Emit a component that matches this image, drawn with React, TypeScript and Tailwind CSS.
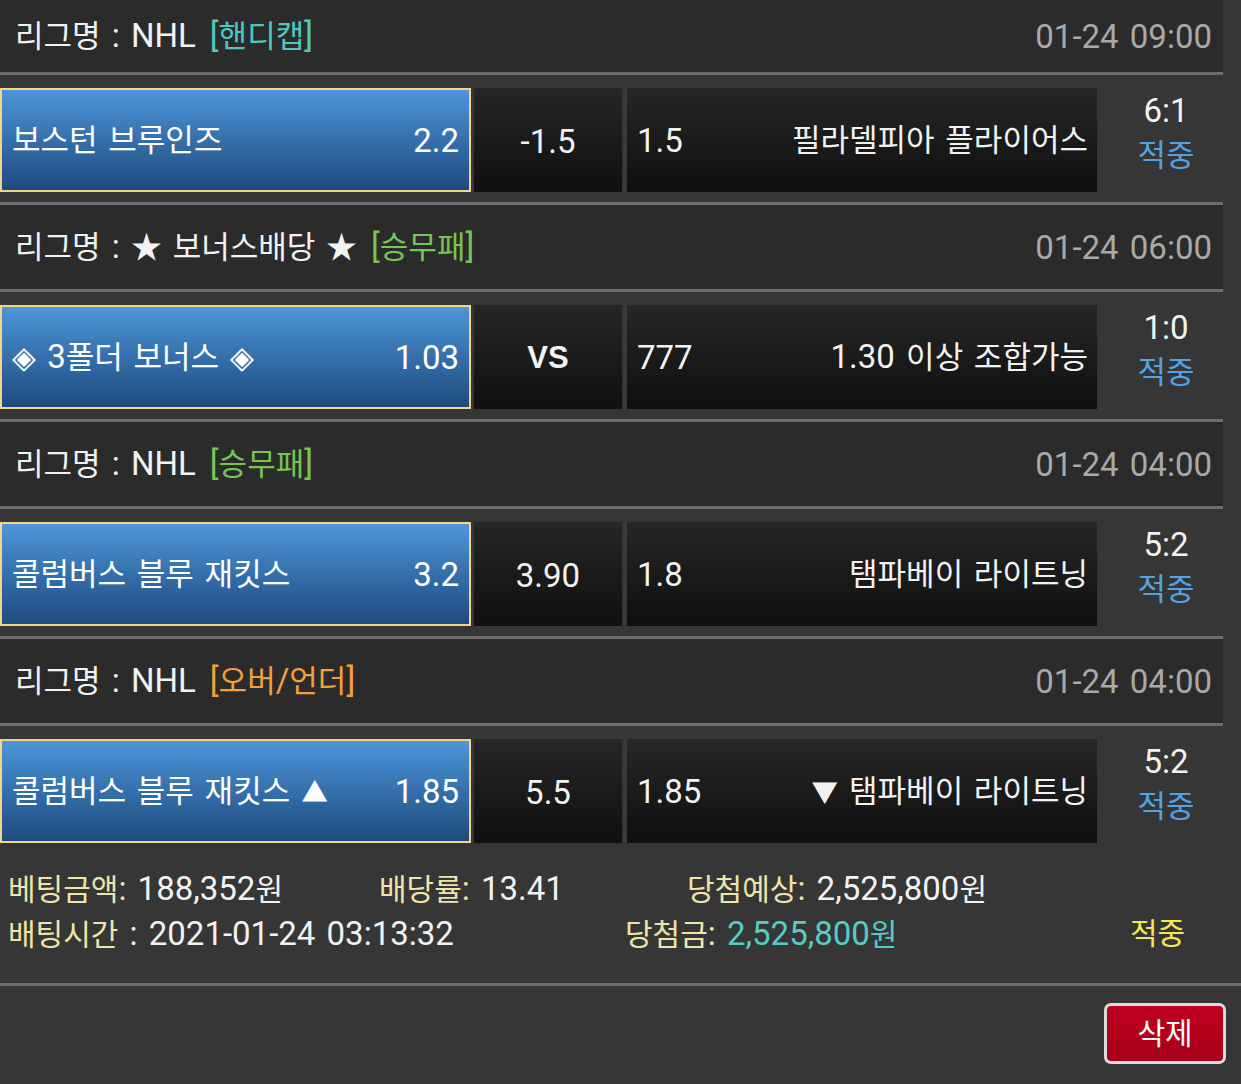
import React from "react";

type Match = {
  league: string;
  tag: string;
  tagColor: string;
  date: string;
  home: string;
  homeOdds: string;
  mid: string;
  midBold?: boolean;
  awayOdds: string;
  away: string;
  score: string;
};

const matches: Match[] = [
  {
    league: "리그명 : NHL",
    tag: "[핸디캡]",
    tagColor: "text-[#4fc9bf]",
    date: "01-24 09:00",
    home: "보스턴 브루인즈",
    homeOdds: "2.2",
    mid: "-1.5",
    awayOdds: "1.5",
    away: "필라델피아 플라이어스",
    score: "6:1",
  },
  {
    league: "리그명 : ★ 보너스배당 ★",
    tag: "[승무패]",
    tagColor: "text-[#78c454]",
    date: "01-24 06:00",
    home: "◈ 3폴더 보너스 ◈",
    homeOdds: "1.03",
    mid: "VS",
    midBold: true,
    awayOdds: "777",
    away: "1.30 이상 조합가능",
    score: "1:0",
  },
  {
    league: "리그명 : NHL",
    tag: "[승무패]",
    tagColor: "text-[#78c454]",
    date: "01-24 04:00",
    home: "콜럼버스 블루 재킷스",
    homeOdds: "3.2",
    mid: "3.90",
    awayOdds: "1.8",
    away: "탬파베이 라이트닝",
    score: "5:2",
  },
  {
    league: "리그명 : NHL",
    tag: "[오버/언더]",
    tagColor: "text-[#f3a03a]",
    date: "01-24 04:00",
    home: "콜럼버스 블루 재킷스 ▲",
    homeOdds: "1.85",
    mid: "5.5",
    awayOdds: "1.85",
    away: "▼ 탬파베이 라이트닝",
    score: "5:2",
  },
];

// Hangul and symbol runs are drawn a little smaller than the Latin text,
// as the Korean fallback font is in the reference.
function T({ s }: { s: string }) {
  const parts = s.split(/([▲▼]|[\u3131-\uD79D★◈]+(?:\s+[\u3131-\uD79D★◈]+)*)/);
  return (
    <>
      {parts.map((p, i) =>
        i % 2 === 1 ? (
          p === "▲" || p === "▼" ? (
            <span key={i} className="text-[0.8em]">
              {p}
            </span>
          ) : (
            <span key={i} className="text-[0.94em]">
              {p}
            </span>
          )
        ) : (
          <React.Fragment key={i}>{p}</React.Fragment>
        )
      )}
    </>
  );
}

function Line() {
  return <div className="h-[3px] w-[1223px] bg-[#6d6d6d]" />;
}

export default function App() {
  return (
    <div
      className="w-[1241px] h-[1084px] overflow-hidden bg-[#363636] text-[#f2f2f2] text-[33px] leading-none [word-spacing:3px]"
      style={{ fontFamily: 'Roboto, "Noto Sans CJK KR", sans-serif' }}
    >
      {matches.map((m, i) => (
        <div key={i}>
          {i > 0 && <Line />}
          <div
            className={`${i === 0 ? "h-[72px]" : "h-[84px]"} w-[1223px] bg-[#2b2b2b] flex items-center justify-between pl-[15px] pr-[11px]`}
          >
            <div className="flex items-center">
              <span>
                <T s={m.league} />
              </span>
              <span className={`ml-[14px] ${m.tagColor}`}>
                <T s={m.tag} />
              </span>
            </div>
            <span className="text-[#a9a9a9]">{m.date}</span>
          </div>
          <Line />
          <div className="h-[127px] flex items-start pt-[13px]">
            <div className="w-[471px] h-[104px] border-2 border-[#f3d489] bg-gradient-to-b from-[#4d96da] to-[#1e4b7f] flex items-center justify-between pl-[10px] pr-[10px] text-white">
              <span>
                <T s={m.home} />
              </span>
              <span>{m.homeOdds}</span>
            </div>
            {m.midBold ? (
              <div
                className="ml-[3px] w-[148px] h-[104px] bg-gradient-to-b from-[#272727] to-[#0f0f0f] flex items-center justify-center font-bold text-[31px]"
                style={{ fontFamily: '"Liberation Sans", Arial, sans-serif' }}
              >
                {m.mid}
              </div>
            ) : (
              <div className="ml-[3px] w-[148px] h-[104px] bg-gradient-to-b from-[#272727] to-[#0f0f0f] flex items-center justify-center pt-[3px]">
                {m.mid}
              </div>
            )}
            <div className="ml-[2px] w-[3px] h-[104px] bg-[#3a3a3a]" />
            <div className="w-[470px] h-[104px] bg-gradient-to-b from-[#272727] to-[#0f0f0f] flex items-center justify-between pl-[10px] pr-[9px]">
              <span>{m.awayOdds}</span>
              <span>
                <T s={m.away} />
              </span>
            </div>
            <div className="w-[138px] flex flex-col items-center">
              <span className="h-[45px] flex items-center">{m.score}</span>
              <span className="h-[45px] flex items-center text-[#52a3e6] text-[31px]">적중</span>
            </div>
          </div>
        </div>
      ))}

      <div className="pt-[13px] text-[33px]">
        <div className="h-[45px] flex items-center pl-[8px]">
          <span className="w-[371px]">
            <span className="text-[#efe5a8] text-[30px]">베팅금액</span>
            <span className="text-[#efe5a8]">:</span> 188,352
            <span className="text-[30px]">원</span>
          </span>
          <span className="w-[308px]">
            <span className="text-[#efe5a8] text-[30px]">배당률</span>
            <span className="text-[#efe5a8]">:</span> 13.41
          </span>
          <span>
            <span className="text-[#efe5a8] text-[30px]">당첨예상</span>
            <span className="text-[#efe5a8]">:</span> 2,525,800
            <span className="text-[30px]">원</span>
          </span>
        </div>
        <div className="h-[45px] flex items-center pl-[8px]">
          <span className="w-[617px]">
            <span className="text-[#efe5a8] text-[30px]">배팅시간</span> : 2021-01-24 03:13:32
          </span>
          <span className="w-[505px]">
            <span className="text-[#efe5a8] text-[30px]">당첨금</span>
            <span className="text-[#efe5a8]">:</span>{" "}
            <span className="text-[#55cdc5]">
              2,525,800<span className="text-[30px]">원</span>
            </span>
          </span>
          <span className="text-[#f2ea4c] text-[30px]">적중</span>
        </div>
      </div>
      <div className="mt-[27px] h-[3px] w-full bg-[#6d6d6d]" />
      <div className="flex justify-end pr-[15px] pt-[17px]">
        <button className="w-[122px] h-[61px] rounded-[7px] border-[3px] border-[#dcdcdc] bg-gradient-to-b from-[#c0001f] to-[#a8001a] text-white text-[30px] flex items-center justify-center">
          삭제
        </button>
      </div>
    </div>
  );
}
